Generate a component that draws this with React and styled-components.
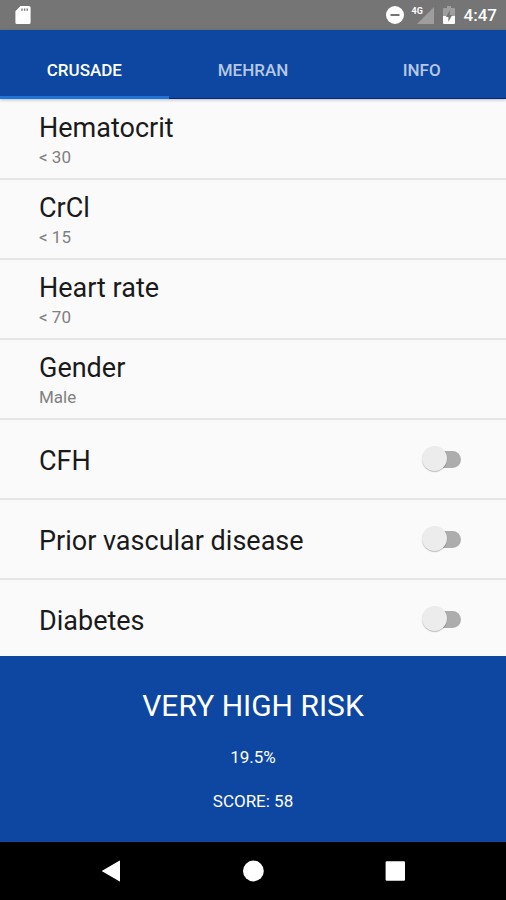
import { useState } from "react";
import styled, { createGlobalStyle } from "styled-components";

const TABS = ["CRUSADE", "MEHRAN", "INFO"];

const CHOICES = [
    { title: "Hematocrit", value: "< 30" },
    { title: "CrCl", value: "< 15" },
    { title: "Heart rate", value: "< 70" },
    { title: "Gender", value: "Male" },
];

const SWITCHES = [
    { id: "cfh", title: "CFH" },
    { id: "vascular", title: "Prior vascular disease" },
    { id: "diabetes", title: "Diabetes" },
];

const SdCardIcon = () => (
    <svg width="16" height="20" viewBox="0 0 16 20" aria-hidden="true">
        <path
            fill="#fff"
            fillRule="evenodd"
            d="M5.5 1H14a1.6 1.6 0 0 1 1.6 1.6v14.8A1.6 1.6 0 0 1 14 19H2a1.6 1.6 0 0 1-1.6-1.6V6.3zM6.3 3.4v2.4h1.4V3.4zm2.6 0v2.4h1.4V3.4zm2.6 0v2.4h1.4V3.4z"
        />
    </svg>
);

const DoNotDisturbIcon = () => (
    <svg width="18" height="18" viewBox="0 0 18 18" aria-hidden="true">
        <circle cx="9" cy="9" r="9" fill="#fff" />
        <rect x="4.5" y="8" width="9" height="2" fill="#757575" />
    </svg>
);

const SignalIcon = () => (
    <svg width="17" height="17" viewBox="0 0 17 17" aria-hidden="true">
        <path fill="#fff" fillOpacity="0.3" d="M17 0v17H0z" />
    </svg>
);

const BatteryIcon = () => (
    <svg width="12" height="20" viewBox="0 0 12 20" aria-hidden="true">
        <path fill="#fff" fillOpacity="0.3" d="M4 1h4v2h3a1 1 0 0 1 1 1v7H0V4a1 1 0 0 1 1-1h3z" />
        <path fill="#fff" d="M0 11h12v7a1 1 0 0 1-1 1H1a1 1 0 0 1-1-1z" />
        <path fill="#757575" d="M6.8 5 3 12h2.4v5L9.2 10H6.8z" />
    </svg>
);

const BackIcon = () => (
    <svg width="20" height="22" viewBox="0 0 20 22" aria-hidden="true">
        <path fill="#fff" d="M18.3.7q.7-.4.7.4v19.8q0 .8-.7.4L1.5 11.6q-1-.6 0-1.2z" />
    </svg>
);

const HomeIcon = () => (
    <svg width="22" height="22" viewBox="0 0 22 22" aria-hidden="true">
        <circle cx="11.4" cy="11" r="10.4" fill="#fff" />
    </svg>
);

const RecentsIcon = () => (
    <svg width="20" height="20" viewBox="0 0 20 20" aria-hidden="true">
        <rect x="0.6" y="0.3" width="19.4" height="19.4" rx="1.2" fill="#fff" />
    </svg>
);

const App = () => {
    const [activeTab, setActiveTab] = useState("CRUSADE");
    const [checked, setChecked] = useState({});

    const toggle = (id) => {
        setChecked((prev) => ({ ...prev, [id]: !prev[id] }));
    };

    return (
        <>
            <GlobalStyle />
            <S.Screen>
                <S.StatusBar>
                    <SdCardIcon />
                    <S.StatusGroup>
                        <DoNotDisturbIcon />
                        <S.Network>
                            <S.NetworkType>4G</S.NetworkType>
                            <SignalIcon />
                        </S.Network>
                        <BatteryIcon />
                        <S.Clock>4:47</S.Clock>
                    </S.StatusGroup>
                </S.StatusBar>

                <S.TabBar role="tablist">
                    {TABS.map((tab) => (
                        <S.Tab
                            key={tab}
                            type="button"
                            role="tab"
                            aria-selected={tab === activeTab}
                            $active={tab === activeTab}
                            onClick={() => setActiveTab(tab)}
                        >
                            {tab}
                        </S.Tab>
                    ))}
                </S.TabBar>

                <S.List>
                    {CHOICES.map(({ title, value }) => (
                        <S.Row key={title}>
                            <S.ChoiceButton type="button">
                                <S.Title>{title}</S.Title>
                                <S.Value>{value}</S.Value>
                            </S.ChoiceButton>
                        </S.Row>
                    ))}
                    {SWITCHES.map(({ id, title }) => (
                        <S.Row key={id}>
                            <S.SwitchLabel htmlFor={id}>
                                <S.Title>{title}</S.Title>
                                <S.Switch
                                    id={id}
                                    type="checkbox"
                                    role="switch"
                                    checked={!!checked[id]}
                                    onChange={() => toggle(id)}
                                />
                            </S.SwitchLabel>
                        </S.Row>
                    ))}
                </S.List>

                <S.Result>
                    <S.Risk>VERY HIGH RISK</S.Risk>
                    <S.ResultText>19.5%</S.ResultText>
                    <S.ResultText>SCORE: 58</S.ResultText>
                </S.Result>

                <S.NavBar>
                    <S.NavButton type="button" aria-label="Back"><BackIcon /></S.NavButton>
                    <S.NavButton type="button" aria-label="Home"><HomeIcon /></S.NavButton>
                    <S.NavButton type="button" aria-label="Recent apps"><RecentsIcon /></S.NavButton>
                </S.NavBar>
            </S.Screen>
        </>
    );
};

export default App;

const GlobalStyle = createGlobalStyle`
    * {
        box-sizing: border-box;
    }

    body {
        margin: 0;
        background: #fafafa;
        font-family: Roboto, "Liberation Sans", sans-serif;
    }

    button {
        margin: 0;
        border: none;
        background: none;
        font-family: inherit;
        cursor: pointer;
    }
`;

const S = {
    Screen: styled.div`
        display: flex;
        flex-direction: column;
        height: 100vh;
    `,

    StatusBar: styled.header`
        flex: none;
        display: flex;
        align-items: center;
        justify-content: space-between;
        height: 30px;
        padding: 0 9px 0 15px;
        background: #757575;
    `,

    StatusGroup: styled.div`
        display: flex;
        align-items: center;
        gap: 9px;
    `,

    Network: styled.div`
        position: relative;
        display: flex;
        padding-left: 4px;
    `,

    NetworkType: styled.span`
        position: absolute;
        top: -1px;
        left: -1px;
        font-size: 9px;
        line-height: 10px;
        font-weight: 700;
        color: #fff;
    `,

    Clock: styled.span`
        font-size: 17px;
        line-height: 30px;
        font-weight: 500;
        color: #fff;
    `,

    TabBar: styled.div`
        position: relative;
        z-index: 1;
        flex: none;
        display: flex;
        height: 69px;
        background: #0d47a1;
        box-shadow: 0 1px 3px rgba(0, 0, 0, 0.25);
    `,

    Tab: styled.button`
        flex: 1;
        padding: ${({ $active }) => ($active ? "14px 0 0" : "14px 0 2px")};
        border-bottom: ${({ $active }) => ($active ? "3px solid #1e74d8" : "1px solid #08237e")};
        font-size: 17px;
        font-weight: 500;
        color: ${({ $active }) => ($active ? "#fff" : "#b6c8e3")};
    `,

    List: styled.ul`
        flex: 1;
        min-height: 0;
        margin: 0;
        padding: 1px 0 0;
        list-style: none;
        overflow-y: auto;
        scrollbar-width: none;
    `,

    Row: styled.li`
        height: 80px;
        border-bottom: 2px solid #e5e5e5;
    `,

    ChoiceButton: styled.button`
        display: flex;
        flex-direction: column;
        justify-content: center;
        width: 100%;
        height: 100%;
        padding: 2px 39px 0;
        text-align: left;
    `,

    SwitchLabel: styled.label`
        display: flex;
        align-items: center;
        justify-content: space-between;
        height: 100%;
        padding: 4px 45px 0 39px;
        cursor: pointer;
    `,

    Title: styled.span`
        font-size: 27px;
        line-height: 34px;
        color: #1a1a1a;
    `,

    Value: styled.span`
        font-size: 17px;
        line-height: 24px;
        color: #808080;
    `,

    Switch: styled.input`
        appearance: none;
        position: relative;
        width: 36px;
        height: 17px;
        margin: 0 0 4px;
        border-radius: 9px;
        background: ${({ checked }) => (checked ? "#86a3d0" : "#adadad")};
        cursor: pointer;

        &::before {
            content: "";
            position: absolute;
            top: -5px;
            left: ${({ checked }) => (checked ? "14px" : "-3px")};
            width: 25px;
            height: 25px;
            border-radius: 50%;
            background: ${({ checked }) => (checked ? "#0d47a1" : "#ececec")};
            box-shadow: 0 1px 1px rgba(0, 0, 0, 0.25);
        }
    `,

    Result: styled.section`
        flex: none;
        display: flex;
        flex-direction: column;
        align-items: center;
        gap: 20px;
        padding: 31px 16px 29px;
        background: #0d47a1;
        color: #fff;
    `,

    Risk: styled.h1`
        margin: 0;
        font-size: 30px;
        line-height: 38px;
        font-weight: 400;
    `,

    ResultText: styled.p`
        margin: 0;
        font-size: 17px;
        line-height: 24px;
    `,

    NavBar: styled.nav`
        flex: none;
        display: flex;
        justify-content: center;
        height: 58px;
        background: #000;
    `,

    NavButton: styled.button`
        display: flex;
        align-items: center;
        justify-content: center;
        width: 28%;
        padding: 0;
    `,
};
